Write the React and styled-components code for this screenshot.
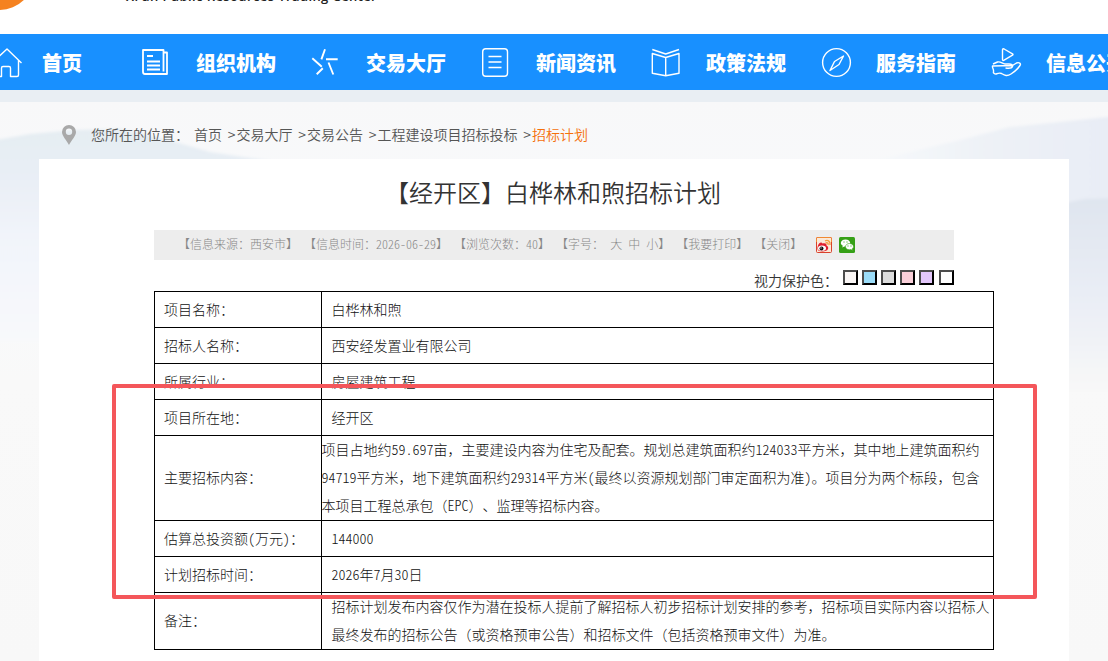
import styled, { createGlobalStyle } from "styled-components";

const NAV = [
  { name: "首页", icon: "home" },
  { name: "组织机构", icon: "news" },
  { name: "交易大厅", icon: "star" },
  { name: "新闻资讯", icon: "list" },
  { name: "政策法规", icon: "book" },
  { name: "服务指南", icon: "compass" },
  { name: "信息公开", icon: "hand" },
];

const CRUMBS = ["首页", "交易大厅", "交易公告", "工程建设项目招标投标"];

const COLORS = ["#faf6f5", "#9bdcf8", "#dcdcdc", "#f9cfd9", "#e3c7fb", "#ffffff"];

const ROWS = [
  { label: "项目名称：", lines: ["白桦林和煦"] },
  { label: "招标人名称：", lines: ["西安经发置业有限公司"] },
  { label: "所属行业：", lines: ["房屋建筑工程"] },
  { label: "项目所在地：", lines: ["经开区"] },
  {
    label: "主要招标内容：",
    height: 84,
    flush: true,
    lines: [
      "项目占地约59.697亩，主要建设内容为住宅及配套。规划总建筑面积约124033平方米，其中地上建筑面积约",
      "94719平方米，地下建筑面积约29314平方米(最终以资源规划部门审定面积为准)。项目分为两个标段，包含",
      "本项目工程总承包（EPC）、监理等招标内容。",
    ],
  },
  { label: "估算总投资额(万元)：", lines: ["144000"] },
  { label: "计划招标时间：", lines: ["2026年7月30日"] },
  {
    label: "备注：",
    height: 56,
    lines: [
      "招标计划发布内容仅作为潜在投标人提前了解招标人初步招标计划安排的参考，招标项目实际内容以招标人",
      "最终发布的招标公告（或资格预审公告）和招标文件（包括资格预审文件）为准。",
    ],
  },
];

// latin letters and digits take half of a chinese character's width
const Mixed = ({ text }) =>
  text
    .split(/([\x21-\x7e]+)/)
    .map((part, i) => (i % 2 ? <Half key={i}>{part}</Half> : part));

const App = () => {
  return (
    <Page>
      <GlobalStyle />
      <Header>
        <LogoMark />
        <LogoText>Xi'an Public Resources Trading Center</LogoText>
      </Header>
      <Nav>
        {NAV.map((item, i) => (
          <NavItem key={item.name} $first={i === 0}>
            <NavIcon type={item.icon} />
            <NavText>{item.name}</NavText>
          </NavItem>
        ))}
      </Nav>
      <Strip />
      <Main>
        <Mountains />
        <Location>
          <Pin width="14" height="20" viewBox="0 0 14 20">
            <path
              fillRule="evenodd"
              fill="#a9a9a9"
              d="M7 0a7 7 0 0 1 7 7c0 4-4.500 8-7 13C4.500 15 0 11 0 7a7 7 0 0 1 7-7zm0 3.600a3.200 3.200 0 1 0 0 6.400 3.200 3.200 0 0 0 0-6.400z"
            />
          </Pin>
          <span>您所在的位置：</span>
          <Crumbs>
            {CRUMBS.map((crumb) => (
              <span key={crumb}>
                {crumb}
                <Arrow>&gt;</Arrow>
              </span>
            ))}
            <Current>招标计划</Current>
          </Crumbs>
        </Location>
        <Paper>
          <Title>【经开区】白桦林和煦招标计划</Title>
          <Meta>
            <span>【信息来源：西安市】</span>
            <span>
              <Mixed text="【信息时间：2026-06-29】" />
            </span>
            <span>
              <Mixed text="【浏览次数：40】" />
            </span>
            <SizeGroup>
              <span>【字号：</span>
              <span>大</span>
              <span>中</span>
              <span>小】</span>
            </SizeGroup>
            <span>【我要打印】</span>
            <span>【关闭】</span>
            <Share>
              <Weibo />
              <Wechat />
            </Share>
          </Meta>
          <Eye>
            <EyeText>视力保护色：</EyeText>
            {COLORS.map((color) => (
              <Swatch key={color} $color={color} />
            ))}
          </Eye>
          <Table>
            {ROWS.map((row) => (
              <Row key={row.label} $height={row.height}>
                <Label>
                  <span>
                    <Mixed text={row.label} />
                  </span>
                </Label>
                <Value $flush={row.flush}>
                  {row.lines.map((line) => (
                    <div key={line}>
                      <Mixed text={line} />
                    </div>
                  ))}
                </Value>
              </Row>
            ))}
          </Table>
        </Paper>
      </Main>
      <Marker />
    </Page>
  );
};

const NavIcon = ({ type }) => (
  <IconSvg viewBox="0 0 30 30">
    {type === "home" && (
      <path d="M0 16 15 2l14.500 14M3.500 13V28.500Q3.500 29.500 5 29.500H9.500V21Q9.500 19.500 11 19.500h6Q18.500 19.500 18.500 21V29.500h6.500Q26.500 29.500 26.500 28V13.500" />
    )}
    {type === "news" && (
      <>
        <path d="M23.500 5.500h3.500V27H5Q3 27 3 25V3h20.500v21.500" strokeWidth="1.800" />
        <path d="M7 9h6M7 14.500h13M7 18.500h13M7 22.500h13" strokeWidth="1.800" />
      </>
    )}
    {type === "star" && (
      <path
        strokeWidth="1.900"
        d="M15 2.200l-3.600 10.200M2.300 11.300l9.500 8.500M16 12.200h11.700M18.500 15.500l4.800 12M12.800 21.300 6.700 27.300"
      />
    )}
    {type === "list" && (
      <>
        <rect x="2.700" y="1.700" width="24.800" height="27.600" rx="3" />
        <path d="M8.500 9.500h13M8.500 15h13M8.500 20.500h13" />
      </>
    )}
    {type === "book" && (
      <path d="M2.300 2.500 15.700 7 29 2.500M2.300 6.500l13.400 4 13.300-4v19.800l-13.300 2.500-13.400-2.500zM15.700 10.500v18" />
    )}
    {type === "compass" && (
      <>
        <circle cx="16.500" cy="15.500" r="13.900" />
        <path d="M23.500 9l-4.500 8.500-9 6 4.500-9z" />
      </>
    )}
    {type === "hand" && (
      <>
        <path d="M12.500 3q0-1.800 1.600-1l8.400 4.800q1 .700 0 1.400l-8.400 5q-1.600.800-1.600-1z" />
        <path d="M3 17l4.500-2c3-1 5 2 7.500 2h4c3 0 4 1.200 3.500 2.500-.700 1.800-4 2-7 1.500M22.500 18.500l4-2.500c2.500-1 5 .500 3.500 2.500-2 3-5 6-9 8.500-4 2.500-6 1.500-9.500-.500-2-1-4 0-5.500.500-1.500 0-3-1-2.500-2.500.500-2-1.500-4-1-5.500z" />
      </>
    )}
  </IconSvg>
);

const Mountains = () => (
  <Backdrop viewBox="0 0 1108 559" preserveAspectRatio="none">
    <defs>
      <linearGradient id="sky" x1="0" y1="0" x2="0" y2="1">
        <stop offset="0" stopColor="#f8f8f9" />
        <stop offset="0.250" stopColor="#f8fafc" />
        <stop offset="0.500" stopColor="#f9f9f9" />
        <stop offset="1" stopColor="#f8f8f8" />
      </linearGradient>
      <linearGradient id="left" x1="0" y1="0" x2="0" y2="1">
        <stop offset="0" stopColor="#e5edf2" />
        <stop offset="0.200" stopColor="#e8eef5" />
        <stop offset="0.500" stopColor="#f1f4fa" />
        <stop offset="1" stopColor="#f8f9fb" />
      </linearGradient>
      <linearGradient id="right" x1="0" y1="0" x2="1" y2="0">
        <stop offset="0" stopColor="#f7f9fb" />
        <stop offset="0.500" stopColor="#edf1f6" />
        <stop offset="1" stopColor="#e8ecf5" />
      </linearGradient>
      <linearGradient id="near" x1="0" y1="0" x2="0" y2="1">
        <stop offset="0" stopColor="#dfe5ef" />
        <stop offset="0.500" stopColor="#e9edf5" />
        <stop offset="1" stopColor="#f8f8f8" />
      </linearGradient>
      <filter id="haze">
        <feGaussianBlur stdDeviation="1.500" />
      </filter>
    </defs>
    <rect width="1108" height="559" fill="url(#sky)" />
    <g filter="url(#haze)">
      <path d="M-10 39 30 32 75 28 120 27 165 37 210 50 290 62V240H-10z" fill="url(#left)" />
      <path d="M870 60 910 50 960 38 1010 25 1050 21 1118 14V200H870z" fill="url(#right)" />
      <path d="M1060 102 1085 97 1118 96V290H1060z" fill="url(#near)" />
    </g>
  </Backdrop>
);

const Weibo = () => (
  <svg width="16" height="16" viewBox="0 0 16 16">
    <rect x="0.500" y="0.500" width="15" height="15" rx="1" fill="#fbe9d8" stroke="#d9412c" />
    <path d="M0.500 5V1.500q0-1 1-1h13q1 0 1 1V5" fill="none" stroke="#f08a33" />
    <path d="M9 4c3-1.500 5.500.500 5 4M9.500 6c2-.700 3 .300 2.500 2" fill="none" stroke="#f39a3b" strokeWidth="1.300" />
    <path d="M2 8.500c1-3 3.500-4 4.500-2 3-1 4.500.500 4 2C14 10.500 12 14.500 6.500 14.500 1 14.500 1 11.500 2 8.500z" fill="#e0202f" />
    <ellipse cx="6" cy="11.200" rx="4" ry="2.600" fill="#fff" />
    <circle cx="5.500" cy="11.400" r="2" fill="#111" />
    <circle cx="5" cy="10.900" r="0.600" fill="#fff" />
  </svg>
);

const Wechat = () => (
  <svg width="16" height="16" viewBox="0 0 16 16">
    <rect width="16" height="16" rx="1.500" fill="#35a016" />
    <path d="M6.500 2.500c2.800 0 4.700 1.600 4.700 3.600S9.300 9.600 6.500 9.600l-1.200-.200-2 1.200.500-1.800C2.500 8 1.800 7.200 1.800 6.100c0-2 1.900-3.600 4.700-3.600z" fill="#fff" />
    <path d="M10.500 6.500c2.300 0 4 1.400 4 3.200 0 .900-.500 1.700-1.300 2.200l.400 1.500-1.700-.800-1.400.200c-2.300 0-4-1.400-4-3.100s1.700-3.200 4-3.200z" fill="#fff" stroke="#35a016" strokeWidth="0.600" />
    <path d="M4.500 5h1M7.500 5h1M8.500 9h1M11.500 9h1" stroke="#35a016" />
  </svg>
);

const GlobalStyle = createGlobalStyle`
  * {
    box-sizing: border-box;
  }

  body {
    margin: 0;
    overflow: hidden;
    background-color: #f8f8f8;
    font-family: "Noto Sans CJK SC", sans-serif;
    text-spacing-trim: space-all;
  }
`;

const Page = styled.div`
  position: relative;
  width: 1108px;
  height: 661px;
  overflow: hidden;
  display: flex;
  flex-direction: column;
`;

const Header = styled.header`
  display: flex;
  align-items: flex-end;
  flex: none;
  height: 34px;
  padding-bottom: 24px;
  background-color: #fff;
`;

const LogoMark = styled.div`
  flex: none;
  width: 72px;
  height: 72px;
  margin-left: -37px;
  border-radius: 50%;
  background-color: #f58220;
`;

const LogoText = styled.div`
  margin: 0 0 5px 91px;
  font-family: "Open Sans", sans-serif;
  font-size: 13px;
  font-weight: 600;
  line-height: 18px;
  letter-spacing: 0.4px;
  color: #222;
  white-space: nowrap;
`;

const Nav = styled.nav`
  display: flex;
  flex: none;
  height: 56px;
  padding-left: 140px;
  background-color: #1890ff;
`;

const NavItem = styled.div`
  display: flex;
  align-items: center;
  flex: none;
  gap: ${(props) => (props.$first ? "20px" : "26px")};
  width: ${(props) => (props.$first ? "148px" : "170px")};
  margin-left: ${(props) => (props.$first ? "-148px" : "0")};
`;

const IconSvg = styled.svg`
  flex: none;
  width: 30px;
  height: 30px;
  overflow: visible;
  fill: none;
  stroke: #fff;
  stroke-width: 1.4;
  stroke-linejoin: round;
`;

const NavText = styled.div`
  padding-top: 2px;
  font-size: 20px;
  font-weight: 900;
  line-height: 56px;
  color: #fff;
  white-space: nowrap;
`;

const Strip = styled.div`
  flex: none;
  height: 12px;
  background-color: #e9eef3;
`;

const Main = styled.main`
  position: relative;
  flex: 1;
  display: flex;
  flex-direction: column;
  padding: 0 39px;
`;

const Backdrop = styled.svg`
  position: absolute;
  top: 0;
  left: 0;
  width: 100%;
  height: 100%;
`;

const Location = styled.div`
  position: relative;
  display: flex;
  align-items: center;
  flex: none;
  height: 57px;
  padding: 6px 0 0 23px;
  font-size: 14px;
  font-weight: 350;
  color: #555;
  white-space: nowrap;
`;

const Pin = styled.svg`
  margin: 2px 15px 0 0;
`;

const Crumbs = styled.div`
  margin-left: 5px;
`;

const Arrow = styled.span`
  display: inline-block;
  width: 14.5px;
  padding-right: 1px;
  text-align: right;
`;

const Current = styled.span`
  color: #f5700a;
`;

const Paper = styled.section`
  position: relative;
  flex: 1;
  padding: 0 115px;
  background-color: #fff;
`;

const Title = styled.h1`
  margin: 0 2px 0 0;
  padding-top: 13px;
  height: 71px;
  font-size: 24px;
  font-weight: 350;
  line-height: 40px;
  text-align: center;
  color: #333;
`;

const Meta = styled.div`
  display: flex;
  align-items: center;
  gap: 6px;
  height: 30px;
  padding-left: 24px;
  background-color: #ededed;
  font-size: 12px;
  font-weight: 300;
  line-height: 28px;
  color: #888;
  white-space: nowrap;

  > span,
  > div > span {
    padding-bottom: 2px;
  }
`;

const SizeGroup = styled.div`
  display: flex;
  gap: 6px;
`;

const Share = styled.div`
  display: flex;
  gap: 7px;
  margin-left: 8px;
`;

const Half = styled.span`
  font-feature-settings: "hwid";
`;

const Eye = styled.div`
  display: flex;
  gap: 4px;
  height: 31px;
  padding: 10px 0 0 600px;
  font-size: 14px;
  font-weight: 350;
  color: #333;
`;

const EyeText = styled.div`
  width: 85px;
  line-height: 21px;
  white-space: nowrap;
`;

const Swatch = styled.div`
  flex: none;
  width: 15px;
  height: 15px;
  border: 2px solid;
  border-color: #4c4c4c #000 #000 #4c4c4c;
  background-color: ${(props) => props.$color};

  &:last-child {
    margin-left: 1px;
  }
`;

const Table = styled.div`
  width: 840px;
  border: 1px solid #000;
  border-top: none;
  font-size: 14px;
  font-weight: 300;
  line-height: 28px;
  color: #111;
  white-space: nowrap;
`;

const Row = styled.div`
  display: grid;
  grid-template-columns: 167px 671px;
  height: ${(props) => (props.$height || 35) + 1}px;
  border-top: 1px solid #000;
`;

const Label = styled.div`
  display: flex;
  align-items: center;
  padding: 0 0 2px 9px;
  border-right: 1px solid #000;
`;

const Value = styled.div`
  align-self: center;
  padding-left: ${(props) => (props.$flush ? "0" : "10px")};
  margin: -2px 0 0 -0.5px;
`;

const Marker = styled.div`
  position: absolute;
  top: 384px;
  left: 112px;
  width: 925px;
  height: 215px;
  border: 4px solid #f4565a;
  border-radius: 2px;
`;

export default App;
